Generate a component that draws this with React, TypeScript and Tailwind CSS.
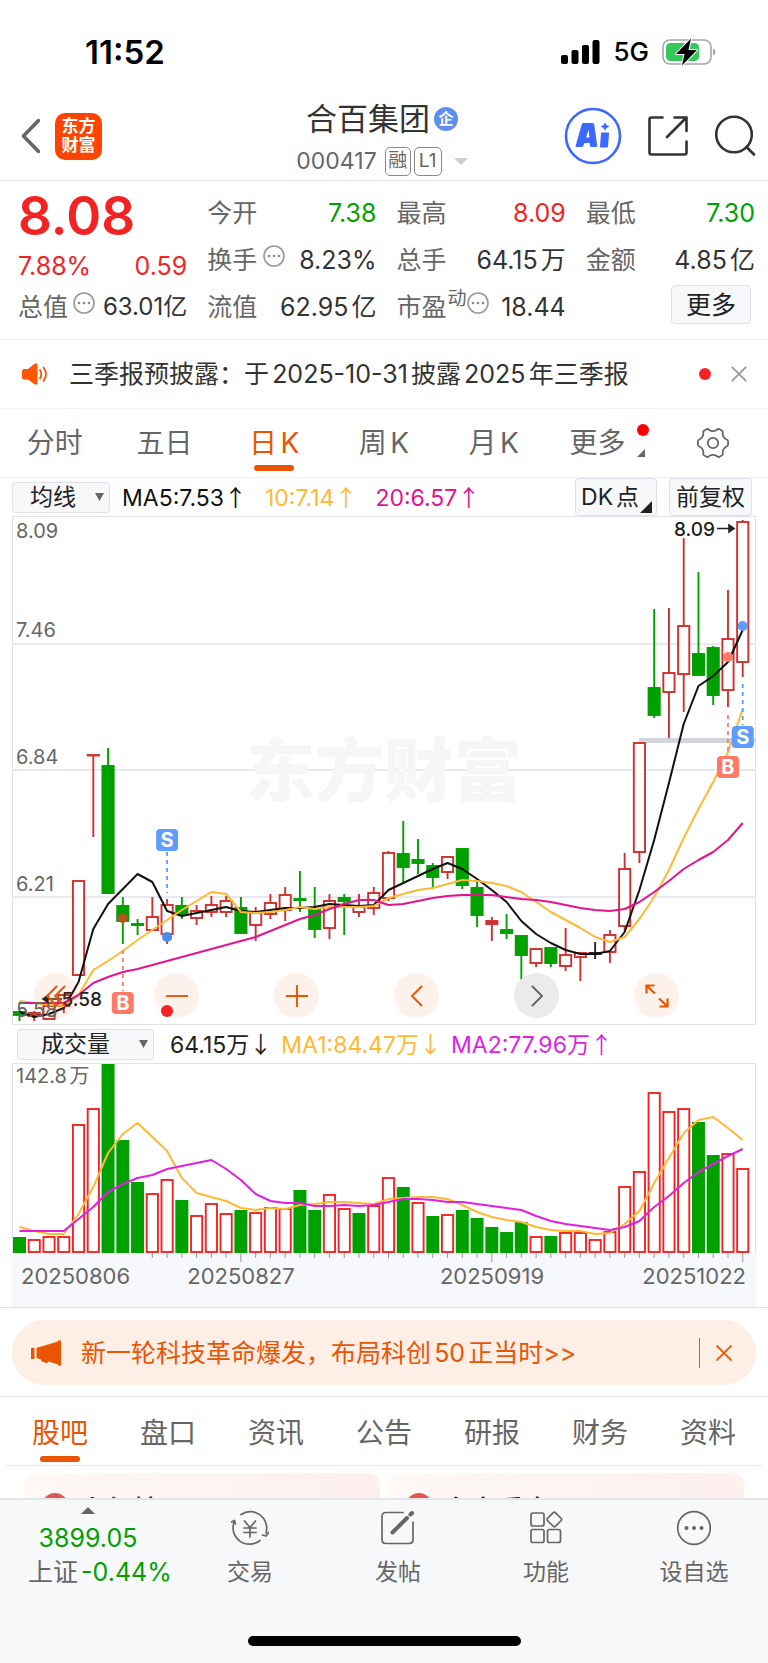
// App.tsx
import { ReactNode } from "react";

type Tone = "up" | "down" | "flat";

// [tone, body top, body bottom, high, low] in chart units, 0 is the top of the plot
type Candle = [Tone, number, number, number, number];

const STEP = 14.76;
const FIRST = 7.5;

const candles: Candle[] = [
  ["down", 496, 499, 492, 505],
  ["up", 497, 500, 495, 505],
  ["up", 490, 503, 490, 503],
  ["up", 479, 490, 479, 497],
  ["up", 365, 459, 365, 459],
  ["up", 239, 239, 239, 321],
  ["down", 250, 377, 232, 377],
  ["down", 390, 405, 381, 428],
  ["down", 408, 409, 403, 419],
  ["up", 401, 414, 381, 414],
  ["up", 389, 418, 383, 428],
  ["down", 390, 398, 381, 403],
  ["up", 395, 402, 389, 409],
  ["up", 389, 396, 380, 401],
  ["up", 385, 396, 380, 401],
  ["down", 392, 417, 381, 417],
  ["up", 397, 409, 391, 425],
  ["up", 387, 398, 378, 403],
  ["up", 379, 394, 371, 405],
  ["down", 383, 384, 355, 396],
  ["down", 393, 413, 371, 422],
  ["up", 385, 412, 378, 423],
  ["down", 382, 385, 378, 419],
  ["up", 391, 396, 378, 401],
  ["up", 377, 392, 371, 399],
  ["up", 337, 382, 335, 385],
  ["down", 338, 351, 305, 366],
  ["down", 344, 347, 323, 358],
  ["down", 350, 361, 347, 372],
  ["up", 341, 356, 341, 363],
  ["down", 333, 369, 333, 373],
  ["down", 372, 399, 366, 411],
  ["up", 405, 408, 401, 425],
  ["down", 414, 417, 398, 423],
  ["down", 420, 439, 420, 465],
  ["up", 433, 447, 433, 451],
  ["down", 432, 447, 432, 451],
  ["up", 439, 450, 412, 455],
  ["up", 437, 441, 436, 465],
  ["flat", 437, 438, 426, 443],
  ["up", 419, 436, 414, 447],
  ["up", 353, 410, 337, 415],
  ["up", 227, 336, 227, 347],
  ["down", 172, 199, 93, 202],
  ["up", 157, 176, 92, 222],
  ["up", 110, 158, 22, 196],
  ["down", 138, 159, 56, 160],
  ["down", 132, 179, 130, 189],
  ["up", 123, 174, 74, 191],
  ["up", 6, 146, 4, 161],
];

const ma5 = [
  496, 501, 498, 492, 466, 413, 388, 373, 358, 366, 395, 400, 397, 394, 391, 395, 396, 394, 392,
  392, 391, 388, 389, 390, 389, 374, 367, 360, 353, 347, 353, 363, 374, 386, 405, 418, 427, 434,
  438, 438, 435, 416, 374, 324, 267, 208, 170, 160, 146, 114,
];
const ma10 = [
  485, 487, 489, 490, 479, 454, 445, 435, 424, 414, 404, 394, 385, 376, 378, 396, 397, 396, 394,
  391, 393, 391, 391, 391, 390, 382, 378, 374, 372, 368, 364, 365, 367, 370, 376, 386, 396, 404,
  412, 421, 426, 421, 403, 381, 354, 322, 293, 266, 236, 193,
];
const ma20 = [
  487, 487, 487, 487, 479, 467, 461, 456, 453, 449, 445, 441, 437, 433, 429, 425, 421, 415, 409,
  403, 399, 393, 388, 384, 384, 389, 388, 385, 382, 380, 379, 379, 379, 381, 383, 384, 386, 389,
  392, 394, 395, 393, 386, 376, 365, 353, 344, 336, 324, 307,
];

const volumeTops = [
  174, 176, 173, 173, 61, 45, 1, 77, 119, 130, 116, 137, 152, 140, 150, 147, 149, 144, 145, 127,
  147, 131, 145, 150, 142, 114, 124, 139, 153, 151, 147, 155, 164, 169, 159, 173, 173, 169, 169,
  176, 168, 123, 108, 29, 48, 45, 59, 92, 90, 105,
];
// days drawn as falling volume
const volumeDown = [0, 6, 7, 8, 11, 15, 19, 20, 23, 26, 28, 30, 31, 32, 33, 34, 36, 46, 47];
const volumeMa1 = [
  164, 168, 171, 171, 151, 124, 90, 71, 60, 74, 88, 115, 130, 134, 138, 145, 147, 145, 146, 142,
  141, 139, 139, 140, 141, 136, 135, 134, 134, 136, 142, 149, 154, 157, 159, 164, 167, 168, 168,
  171, 170, 161, 148, 120, 95, 70, 57, 54, 65, 77,
];
const volumeMa2 = [
  168, 168, 168, 168, 156, 144, 129, 121, 115, 112, 106, 103, 100, 97, 106, 117, 131, 138, 140,
  140, 143, 143, 142, 143, 142, 139, 136, 136, 137, 139, 139, 141, 143, 145, 147, 153, 158, 161,
  163, 165, 167, 164, 158, 144, 133, 120, 109, 101, 93, 86,
];

const xAt = (i: number) => FIRST + i * STEP;
const toPoints = (ys: number[]) => ys.map((y, i) => `${xAt(i)},${y}`).join(" ");

const toneColor = { up: "#cf3030", down: "#00a000", flat: "#222222" };

function StatusBar() {
  return (
    <div className="flex h-[92px] items-center justify-between pt-[11px] pr-[52px] pl-[85px] text-black">
      <span className="text-[33px] leading-10 font-semibold">11:52</span>
      <div className="flex items-center gap-[13px]">
        <svg viewBox="0 0 39 24" className="h-6 w-[39px]">
          <rect x="0" y="15" width="7" height="9" rx="2" />
          <rect x="10.5" y="10" width="7" height="14" rx="2" />
          <rect x="21" y="5" width="7" height="19" rx="2" />
          <rect x="31.5" y="0" width="7" height="24" rx="2" />
        </svg>
        <span className="text-[26px] leading-8 font-medium">5G</span>
        <svg viewBox="0 0 54 28" className="h-7 w-[54px]">
          <rect x="1" y="2" width="48" height="24" rx="7" fill="none" stroke="#a5a5a5" strokeWidth="1.6" />
          <rect x="4" y="5" width="33" height="18" rx="4.5" fill="#34c759" />
          <path d="M51 10.5q2.5 1 2.5 3.5T51 17.5z" fill="#a5a5a5" />
          <path
            d="M29 .5 14 16h8.500L20 27.500 35 12h-8.500z"
            fill="#000"
            stroke="#fff"
            strokeWidth="2"
            paintOrder="stroke"
            strokeLinejoin="round"
          />
        </svg>
      </div>
    </div>
  );
}

function Header() {
  return (
    <header className="grid h-[89px] grid-cols-[1fr_auto_1fr] items-center border-b border-[#e4e4e4]">
      <div className="flex items-center gap-[15px] pl-[21px]">
        <button aria-label="返回">
          <svg viewBox="0 0 19 34" className="h-[34px] w-[19px]" fill="none" stroke="#666" strokeWidth="3.600">
            <path d="M17.500 1.500 2.500 17l15 15.500" strokeLinejoin="round" strokeLinecap="round" />
          </svg>
        </button>
        <div className="flex h-[47px] w-[47px] flex-col items-center justify-center rounded-[10px] bg-[#ff4400] text-[17px] leading-[19px] font-bold text-white">
          <span>东方</span>
          <span>财富</span>
        </div>
      </div>
      <div className="flex flex-col items-center gap-[6px] self-end pr-1 pb-[3px]">
        <div className="flex h-10 items-center gap-1">
          <h1 className="text-[31px] leading-10 text-[#333]">合百集团</h1>
          <span className="flex h-6 w-6 items-center justify-center rounded-full bg-[#5f8fee] text-[15px] leading-6 font-bold text-white">
            企
          </span>
        </div>
        <div className="flex h-8 items-center text-[#666]">
          <span className="text-[23px] leading-8">000417</span>
          <span className="ml-2 flex h-[29px] w-[26px] items-center justify-center rounded-[5px] border border-[#888] text-[19px] leading-7">
            融
          </span>
          <span className="ml-[3px] flex h-[29px] w-7 items-center justify-center rounded-[5px] border border-[#888] text-[19px] leading-7">
            L1
          </span>
          <svg viewBox="0 0 14 7" className="ml-3 h-[7px] w-[14px]" fill="#ccc">
            <path d="M0 0h14L7 7z" />
          </svg>
        </div>
      </div>
      <div className="flex items-center justify-end gap-[26px] pr-3">
        <button aria-label="Ai">
          <svg viewBox="0 0 58 58" className="h-[58px] w-[58px]">
            <circle cx="29" cy="29" r="27" fill="none" stroke="#3b68ff" strokeWidth="2.600" />
            <path
              d="M19 16h9.500q1.500 0 1.700 1.500l3 21q.2 1.500-1.300 1.500h-4.500q-1.400 0-1.500-1.500l-.2-2.500h-5.200l-1.300 3q-.5 1-1.700 1h-5q-1.500 0-.8-1.500l6-21q.4-1.500 1.300-1.500zM24.500 23l-2.500 7.500h3.500z"
              fill="#3b68ff"
              fillRule="evenodd"
            />
            <path d="M38 25.500h6q1 0 1 1l-1 13q-.1 1-1.100 1h-6q-1 0-.9-1l1-13q.1-1 1-1z" fill="#3b68ff" />
            <path d="M41 15q.8 3.500 4.500 4.500-3.700 1-4.500 4.500-.8-3.500-4.500-4.500 3.700-1 4.500-4.500z" fill="#3b68ff" />
          </svg>
        </button>
        <button aria-label="分享">
          <svg viewBox="0 0 40 40" className="h-10 w-10" fill="none" stroke="#333" strokeWidth="2.600" strokeLinecap="round" strokeLinejoin="round">
            <path d="M14.500 1.500H3.500q-2 0-2 2v33q0 2 2 2h33q2 0 2-2V25.500M26.500 1.500h12v13.500M38.500 1.500 19 21" />
          </svg>
        </button>
        <button aria-label="搜索">
          <svg viewBox="0 0 42 42" className="h-[42px] w-[42px]" fill="none" stroke="#333" strokeWidth="2.600" strokeLinecap="round">
            <circle cx="20" cy="19.500" r="17.800" />
            <path d="m32.500 32 7.500 7.500" />
          </svg>
        </button>
      </div>
    </header>
  );
}

function InfoDots() {
  return (
    <svg viewBox="0 0 22 22" className="h-[22px] w-[22px] shrink-0">
      <circle cx="11" cy="11" r="10" fill="none" stroke="#999" strokeWidth="1.600" />
      <g fill="#888">
        <circle cx="6" cy="11" r="1.300" />
        <circle cx="11" cy="11" r="1.300" />
        <circle cx="16" cy="11" r="1.300" />
      </g>
    </svg>
  );
}

function Stat({
  label,
  value,
  className = "text-[#333]",
  info,
  sup,
}: {
  label: string;
  value: string;
  className?: string;
  info?: boolean;
  sup?: string;
}) {
  return (
    <div className="flex h-[47px] items-center justify-between whitespace-nowrap">
      <span className="flex items-center text-[#666]">
        {label}
        {sup && <span className="mb-4 ml-px text-[19px] leading-6">{sup}</span>}
        {info && (
          <span className={sup ? "mb-2" : "mb-2 ml-[6px]"}>
            <InfoDots />
          </span>
        )}
      </span>
      <span className={className}>{value}</span>
    </div>
  );
}

function Quote() {
  return (
    <section className="grid grid-cols-4 gap-5 border-b border-[#f0f0f2] pt-2 pr-[13px] pb-[9px] pl-[18px] text-[25px] leading-8">
      <div>
        <div className="flex h-[54px] items-center text-[53px] leading-[54px] font-semibold text-[#f42323]">8.08</div>
        <div className="flex h-[46px] items-center justify-between text-[#f42323]">
          <span>7.88%</span>
          <span>0.59</span>
        </div>
        <div className="flex h-9 items-center justify-between whitespace-nowrap">
          <span className="flex items-center gap-[5px] text-[#666]">
            总值
            <span className="mb-2">
              <InfoDots />
            </span>
          </span>
          <span className="text-[24px] text-[#333] [text-autospace:no-autospace]">63.01亿</span>
        </div>
      </div>
      <div>
        <Stat label="今开" value="7.38" className="text-[#00a000]" />
        <Stat label="换手" value="8.23%" info />
        <Stat label="流值" value="62.95亿" />
      </div>
      <div>
        <Stat label="最高" value="8.09" className="text-[#f42323]" />
        <Stat label="总手" value="64.15万" />
        <Stat label="市盈" value="18.44" sup="动" info />
      </div>
      <div>
        <Stat label="最低" value="7.30" className="text-[#00a000]" />
        <Stat label="金额" value="4.85亿" />
        <div className="flex justify-end pt-[2px] pr-1">
          <button className="h-[39px] w-20 rounded-[4px] border border-[#dfe1e8] bg-[#f7f8fa] text-[25px] leading-8 text-[#222]">
            更多
          </button>
        </div>
      </div>
    </section>
  );
}

function Notice() {
  return (
    <section className="flex h-[69px] items-center border-b border-[#f0f0f2] pr-[21px] pl-[22px]">
      <svg viewBox="0 0 26 22" className="h-[22px] w-[26px]">
        <path d="M2.500 6H6l6.500-5.200Q15.500-.5 15.500 2v18q0 2.500-3 1.200L6 16.500H2.500Q0 16.500 0 14V8.500Q0 6 2.500 6z" fill="#ff5400" />
        <path d="M18 7q2.500 4 0 8.500M21.500 4.500q5 6.500 0 13.500" fill="none" stroke="#ff5400" strokeWidth="1.800" strokeLinecap="round" />
      </svg>
      <p className="ml-[21px] text-[25px] leading-8 text-[#333]">三季报预披露：于2025-10-31披露2025年三季报</p>
      <span className="ml-auto h-3 w-3 rounded-full bg-[#f42323]" />
      <button aria-label="关闭" className="ml-5">
        <svg viewBox="0 0 16 16" className="h-4 w-4" stroke="#999" strokeWidth="1.800">
          <path d="m.8.8 14.400 14.400M15.200.8.8 15.200" />
        </svg>
      </button>
    </section>
  );
}

function PeriodTabs() {
  return (
    <nav className="grid h-[69px] grid-cols-7 border-b border-[#f0f0f2] text-[28px] leading-9 text-[#666]">
      {["分时", "五日", "日K", "周K", "月K"].map((label) => (
        <button
          key={label}
          className={
            label === "日K"
              ? "relative flex items-center justify-center text-[#ea5504]"
              : "flex items-center justify-center"
          }
        >
          {label}
          {label === "日K" && <span className="absolute bottom-[6px] h-[6px] w-10 rounded-full bg-[#ea5504]" />}
        </button>
      ))}
      <button className="flex items-center justify-center">
        <span className="relative pr-3">
          更多
          <span className="absolute -top-px -right-3 h-3 w-3 rounded-full bg-[#ff0000]" />
          <svg viewBox="0 0 8 8" className="absolute -right-2 bottom-1 h-2 w-2" fill="#666">
            <path d="M8 0v8H0z" />
          </svg>
        </span>
      </button>
      <button aria-label="设置" className="flex items-center justify-center">
        <svg viewBox="0 0 32 30" className="h-[30px] w-8" fill="none" stroke="#666" strokeWidth="1.800" strokeLinejoin="round">
          <path d="M9.500 1.200q1.800-.6 2.700.8 3.800 2.400 7.600 0 .9-1.400 2.700-.8l2.500 1.500q1.200 1 .6 2.600.2 4.500 4 6.200 1.500.6 1.500 2v3q0 1.400-1.500 2-3.800 1.700-4 6.200.6 1.600-.6 2.600l-2.500 1.500q-1.800.6-2.700-.8-3.800-2.400-7.600 0-.9 1.400-2.700.8L7 27.300q-1.200-1-.6-2.600-.2-4.500-4-6.200-1.500-.6-1.500-2v-3q0-1.400 1.500-2 3.800-1.700 4-6.200Q5.800 3.700 7 2.700z" />
          <circle cx="16" cy="15" r="5.200" />
        </svg>
      </button>
    </nav>
  );
}

function Indicator({ label, name, className }: { label: string; name: string; className: string }) {
  return (
    <label className="relative block shrink-0">
      <select
        aria-label={name}
        className={`${className} block h-[31px] appearance-none rounded-[4px] border border-[#dfe1e8] bg-[#f7f8fa] text-[23px] leading-7 text-[#222]`}
      >
        <option>{label}</option>
      </select>
      <svg viewBox="0 0 9 8" className="pointer-events-none absolute top-[11px] right-[6px] h-2 w-[9px]" fill="#666">
        <path d="M0 0h9L4.500 8z" />
      </svg>
    </label>
  );
}

function Reading({ text, arrow, className }: { text: string; arrow: string; className: string }) {
  return (
    <span className={className}>
      {text}
      <span className="font-['Noto_Sans_CJK_SC',sans-serif]">{arrow}</span>
    </span>
  );
}

function Marker({ i, top, kind, from, to }: { i: number; top: number; kind: "B" | "S"; from: number; to: number }) {
  const color = kind === "B" ? "#ff7a66" : "#5e9dfc";
  return (
    <g>
      <line x1={xAt(i)} x2={xAt(i)} y1={from} y2={to} stroke={color} strokeWidth="1.800" strokeDasharray="4 4" />
      <rect x={xAt(i) - 11} y={top} width="22" height="22" rx="4" fill={color} />
      <text x={xAt(i)} y={top + 18} fontSize="20" fontWeight="700" fill="#fff" textAnchor="middle">
        {kind}
      </text>
    </g>
  );
}

function PriceChart() {
  return (
    <svg viewBox="0 0 744 509" className="block h-auto w-full">
      <rect x=".5" y=".5" width="743" height="508" fill="none" stroke="#e1e2e8" />
      {[128, 254, 381].map((y) => (
        <line key={y} x1="0" x2="744" y1={y} y2={y} stroke="#e9eaf1" strokeWidth="2" />
      ))}
      <text x="372" y="280" fontSize="69" fontWeight="900" fill="#f6f6f7" textAnchor="middle">
        东方财富
      </text>
      <rect x="627" y="222" width="117" height="5" fill="#d3d5da" />
      {candles.map(([tone, top, bottom, high, low], i) => {
        const x = xAt(i);
        const hollow = tone === "up" && bottom - top > 3;
        return (
          <g key={i} stroke={toneColor[tone]} strokeWidth="1.900">
            <line x1={x} x2={x} y1={high} y2={low} />
            <rect
              x={x - 5.6}
              y={top}
              width="11.200"
              height={Math.max(bottom - top, 0.5)}
              fill={hollow ? "#fff" : toneColor[tone]}
            />
          </g>
        );
      })}
      <g fill="none" strokeWidth="2" strokeLinejoin="round">
        <polyline points={toPoints(ma5)} stroke="#111" />
        <polyline points={toPoints(ma10)} stroke="#ffb935" />
        <polyline points={toPoints(ma20)} stroke="#e3148c" />
      </g>
      <g fontSize="20" fill="#666">
        <text x="4" y="22">8.09</text>
        <text x="4" y="121">7.46</text>
        <text x="4" y="248">6.84</text>
        <text x="4" y="375">6.21</text>
        <text x="4" y="501">5.58</text>
      </g>
      <g fontSize="19" fontWeight="500" fill="#222">
        <text x="703" y="20" textAnchor="end">8.09</text>
        <text x="90" y="490" textAnchor="end">5.58</text>
      </g>
      <g stroke="#222" strokeWidth="1.600" fill="#222">
        <path d="M705 12.500h16M717 9l5 3.500-5 3.500z" />
        <path d="M50 483H34M36 479.500l-5 3.500 5 3.500z" />
      </g>
      <circle cx={xAt(7)} cy="402" r="5" fill="#b0561f" />
      <circle cx={xAt(10)} cy="421" r="5" fill="#4c8af0" />
      <circle cx={xAt(48)} cy="141" r="5" fill="#ff7a66" />
      <circle cx={xAt(49)} cy="110" r="5" fill="#5e9dfc" />
      <Marker kind="S" i={10} top={313} from={336} to={377} />
      <Marker kind="B" i={7} top={476} from={434} to={475} />
      <Marker kind="B" i={48} top={240} from={199} to={239} />
      <Marker kind="S" i={49} top={210} from={168} to={209} />
    </svg>
  );
}

function ChartControl({ label, muted, children }: { label: string; muted?: boolean; children: ReactNode }) {
  return (
    <button
      aria-label={label}
      className={
        muted
          ? "relative flex h-[45px] w-[45px] items-center justify-center rounded-full bg-[#ebebeb] text-[#666]"
          : "relative flex h-[45px] w-[45px] items-center justify-center rounded-full bg-[#ea5504]/8 text-[#ea5504]"
      }
    >
      <svg viewBox="0 0 24 24" className="h-6 w-6" fill="none" stroke="currentColor" strokeWidth="1.900">
        {children}
      </svg>
    </button>
  );
}

function VolumeChart() {
  return (
    <svg viewBox="0 0 744 244" className="block h-auto w-full">
      <rect x="0" y="190" width="744" height="54" fill="#f7f8fb" />
      <path d="M.5 190V.5h743V190" fill="none" stroke="#e1e2e8" />
      {volumeTops.map((top, i) =>
        volumeDown.includes(i) ? (
          <rect key={i} x={xAt(i) - 6.5} y={top} width="13" height={190 - top} fill="#00a000" />
        ) : (
          <rect
            key={i}
            x={xAt(i) - 5.6}
            y={top + 1}
            width="11.200"
            height={188 - top}
            fill="#fff"
            stroke="#f42323"
            strokeWidth="1.900"
          />
        ),
      )}
      {candles.map((_, i) => {
        if (i < 9) return null;
        const major = i === 15 || i === 32 || i === 49;
        return <line key={i} x1={xAt(i)} x2={xAt(i)} y1="190" y2={major ? 199 : 195} stroke="#999" />;
      })}
      <g fill="none" strokeWidth="2" strokeLinejoin="round">
        <polyline points={toPoints(volumeMa1)} stroke="#ffb935" />
        <polyline points={toPoints(volumeMa2)} stroke="#e01fe0" />
      </g>
      <g fill="#666" fontSize="22">
        <text x="4" y="20" fontSize="20">142.8万</text>
        <text x="9" y="221">20250806</text>
        <text x="229" y="221" textAnchor="middle">20250827</text>
        <text x="480" y="221" textAnchor="middle">20250919</text>
        <text x="734" y="221" textAnchor="end">20251022</text>
      </g>
    </svg>
  );
}

function Charts() {
  return (
    <section className="border-b border-[#e1e2e8] px-3">
      <div className="flex h-[38px] items-center justify-between pr-1">
        <div className="flex items-center gap-3">
          <Indicator label="均线" name="主图指标" className="w-[98px] pl-[17px]" />
          <div className="flex gap-[18px] text-[23px] leading-8 whitespace-nowrap">
            <Reading text="MA5:7.53" arrow="↑" className="text-[#111]" />
            <Reading text="10:7.14" arrow="↑" className="text-[#ffb935]" />
            <Reading text="20:6.57" arrow="↑" className="text-[#e3148c]" />
          </div>
        </div>
        <div className="flex gap-3 text-[23px] leading-8 text-[#222]">
          <button className="relative h-[38px] w-[82px] rounded-[4px] border border-[#dfe1e8] bg-[#f7f8fa] pr-3 whitespace-nowrap">
            DK点
            <svg viewBox="0 0 12 12" className="absolute right-1 bottom-[2px] h-3 w-3" fill="#222">
              <path d="M12 0v12H0z" />
            </svg>
          </button>
          <button className="h-[38px] w-[83px] rounded-[4px] border border-[#dfe1e8] bg-[#f7f8fa] whitespace-nowrap">
            前复权
          </button>
        </div>
      </div>
      <div className="relative">
        <PriceChart />
        <div className="absolute bottom-[7px] left-[22px] flex gap-[75px]">
          <ChartControl label="最早">
            <path d="M12 2 2 12l10 10M20 2 10 12l10 10" />
          </ChartControl>
          <ChartControl label="缩小">
            <path d="M1 12h22" />
          </ChartControl>
          <ChartControl label="放大">
            <path d="M1 12h22M12 1v22" />
          </ChartControl>
          <ChartControl label="向前">
            <path d="M17 2 7 12l10 10" />
          </ChartControl>
          <ChartControl label="向后" muted>
            <path d="m7 2 10 10L7 22" />
          </ChartControl>
          <ChartControl label="全屏">
            <path d="M1.500 9.500v-8h8M1.500 1.500l8.500 8M22.500 14.500v8h-8M22.500 22.500l-8.500-8" strokeWidth="2.200" />
          </ChartControl>
          <span className="absolute top-8 left-[127px] h-3 w-3 rounded-full bg-[#f42323]" />
        </div>
      </div>
      <div className="flex h-[38px] items-center gap-4 pl-[5px]">
        <Indicator label="成交量" name="副图指标" className="w-[137px] pl-[23px]" />
        <div className="flex gap-[9px] text-[23px] leading-8 whitespace-nowrap [text-autospace:no-autospace]">
          <Reading text="64.15万" arrow="↓" className="text-[#222]" />
          <Reading text="MA1:84.47万" arrow="↓" className="text-[#ffb935]" />
          <Reading text="MA2:77.96万" arrow="↑" className="text-[#e01fe0]" />
        </div>
      </div>
      <VolumeChart />
    </section>
  );
}

function Banner() {
  return (
    <section className="border-b border-[#e4e4e8] px-3 pt-3 pb-[11px]">
      <div className="flex h-[65px] items-center rounded-full bg-[#fdeee6] pr-6 pl-[19px] text-[#ea5504]">
        <svg viewBox="0 0 31 26" className="h-[26px] w-[31px]" fill="currentColor">
          <path d="M0 8h3.500v11H0zM5.500 8l3-1L27 1.500V.5h3v25h-3v-1l-9.500-3q-1.500 2.500-3.500 1l-3-1q-1-.5-1-2l-4.500-1.500z" />
        </svg>
        <a href="#star50" className="ml-[19px] text-[25px] leading-8">
          新一轮科技革命爆发，布局科创50正当时&gt;&gt;
        </a>
        <span className="ml-auto h-[30px] w-px bg-[#ea5504]" />
        <button aria-label="关闭" className="ml-4">
          <svg viewBox="0 0 16 16" className="h-4 w-4" stroke="currentColor" strokeWidth="1.800">
            <path d="m.5.5 15 15M15.500.5l-15 15" />
          </svg>
        </button>
      </div>
    </section>
  );
}

function InfoTabs() {
  return (
    <nav className="mx-[6px] grid h-[69px] grid-cols-7 border-b border-[#e9e9ec] text-[28px] leading-9 text-[#666]">
      {["股吧", "盘口", "资讯", "公告", "研报", "财务", "资料"].map((label, i) => (
        <button
          key={label}
          className={
            i === 0
              ? "relative flex items-center justify-center pt-1 text-[#ea5504]"
              : "flex items-center justify-center pt-1"
          }
        >
          {label}
          {i === 0 && <span className="absolute bottom-[3px] h-[6px] w-10 rounded-full bg-[#ea5504]" />}
        </button>
      ))}
    </nav>
  );
}

function Cards() {
  return (
    <section className="grid h-8 grid-cols-2 gap-2 overflow-hidden px-6 pt-[7px]">
      {["人气榜", "多空看盘"].map((title) => (
        <div
          key={title}
          className="flex h-20 items-start gap-[11px] rounded-t-xl bg-linear-to-r from-[#fef8f6] to-[#fdf0ee] px-[18px] pt-5"
        >
          <span className="h-[26px] w-[26px] rounded-full bg-[#dd5850]" />
          <span className="pt-[2px] text-[27px] leading-8 font-medium text-[#222]">{title}</span>
        </div>
      ))}
    </section>
  );
}

function NavItem({ label, children }: { label: string; children: ReactNode }) {
  return (
    <button className="flex flex-1 flex-col items-center gap-[10px]">
      <svg viewBox="0 0 38 36" className="h-9 w-[38px]" fill="none" stroke="#666" strokeWidth="1.700" strokeLinecap="round" strokeLinejoin="round">
        {children}
      </svg>
      <span className="text-[23px] leading-8">{label}</span>
    </button>
  );
}

function BottomBar() {
  return (
    <footer className="border-t-2 border-[#e4e5e9] bg-[#f7f8fa] text-[#666]">
      <div className="flex pt-[10px]">
        <div className="flex w-[176px] flex-col">
          <svg viewBox="0 0 14 7" className="-mt-[3px] h-[7px] w-[14px] self-center" fill="#666">
            <path d="M0 7h14L7 0z" />
          </svg>
          <span className="mt-2 self-center text-[25px] leading-8 text-[#00a000]">3899.05</span>
          <span className="mt-[2px] pl-7 text-[25px] leading-8 whitespace-nowrap">
            上证 <span className="-ml-1 text-[#00a000]">-0.44%</span>
          </span>
        </div>
        <NavItem label="交易">
          <path d="M10 4.500A16.500 16.500 0 0 1 35 23M35 26l-3.500-1M35 26l3-4M29 30.500A16.500 16.500 0 0 1 3.500 11M3.500 10.500.5 12M3.500 10.500l1 3.500" />
          <path d="m13.500 11 5.500 6.500L24.500 11M19 17.500V27M13 18h12M13 22.500h12" />
        </NavItem>
        <NavItem label="发帖">
          <path d="M24 2.500H7q-4 0-4 4v23q0 4 4 4h23q4 0 4-4V12" />
          <path d="M13.500 22.500 28 8M31.500 4.500l1.500-1.500" strokeWidth="4" />
        </NavItem>
        <NavItem label="功能">
          <rect x="4" y="3" width="13" height="13" rx="2" />
          <rect x="4" y="19.500" width="13" height="13" rx="2" />
          <rect x="20.500" y="19.500" width="13" height="13" rx="2" />
          <path d="m26.300 2.600-5.900 5.900q-1 1 0 2l5.900 5.900q1 1 2 0l5.900-5.900q1-1 0-2l-5.900-5.900q-1-1-2 0z" />
        </NavItem>
        <NavItem label="设自选">
          <circle cx="19" cy="18" r="16.300" />
          <path d="M11.500 18h.01M19 18h.01M26.500 18h.01" strokeWidth="4" />
        </NavItem>
      </div>
      <div className="flex justify-center pt-12 pb-[19px]">
        <span className="h-[10px] w-[273px] rounded-full bg-black" />
      </div>
    </footer>
  );
}

export default function App() {
  return (
    <div className="min-h-screen bg-white font-[Inter,'Noto_Sans_CJK_SC',sans-serif] [text-autospace:normal]">
      <StatusBar />
      <Header />
      <Quote />
      <Notice />
      <PeriodTabs />
      <Charts />
      <Banner />
      <InfoTabs />
      <Cards />
      <BottomBar />
    </div>
  );
}
